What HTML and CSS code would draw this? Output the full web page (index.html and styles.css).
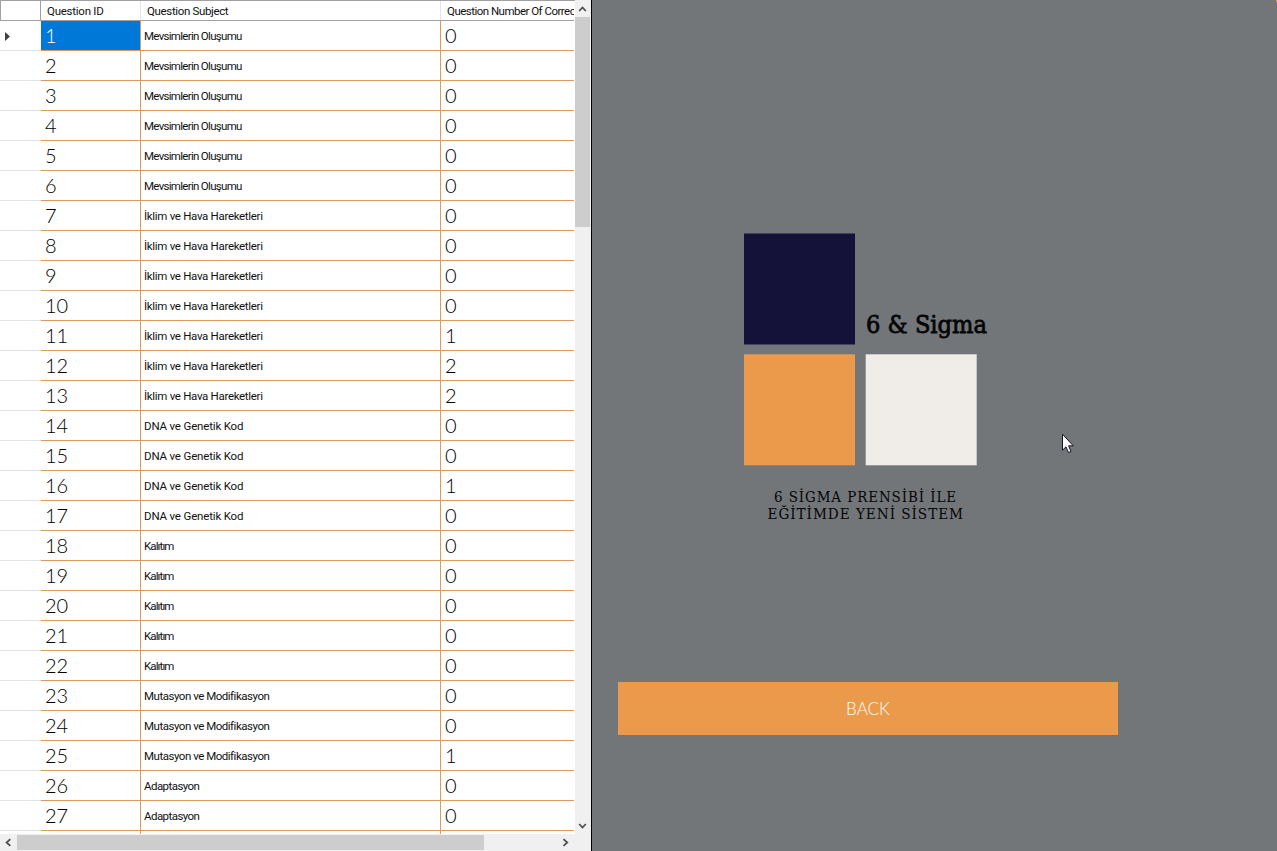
FILE: index.html
```
<!DOCTYPE html>
<html lang="tr">
<head>
<meta charset="utf-8">
<title>6 &amp; Sigma</title>
<link rel="stylesheet" href="styles.css">
</head>
<body>
<main class="app">
<section class="grid-pane">
<div class="grid-view">
<div class="head"><span class="corner"></span><span class="h-id">Question ID</span><span class="h-subject">Question Subject</span><span class="h-count">Question Number Of Correc</span></div>
<div class="row"><span class="gutter"><svg width="7" height="11" viewBox="0 0 7 11"><path d="M1 1L6 5.5L1 10Z" fill="#404040"/></svg></span><span class="num selected">1</span><span class="subject season">Mevsimlerin Oluşumu</span><span class="num count">0</span></div>
<div class="row"><span class="gutter"></span><span class="num">2</span><span class="subject season">Mevsimlerin Oluşumu</span><span class="num count">0</span></div>
<div class="row"><span class="gutter"></span><span class="num">3</span><span class="subject season">Mevsimlerin Oluşumu</span><span class="num count">0</span></div>
<div class="row"><span class="gutter"></span><span class="num">4</span><span class="subject season">Mevsimlerin Oluşumu</span><span class="num count">0</span></div>
<div class="row"><span class="gutter"></span><span class="num">5</span><span class="subject season">Mevsimlerin Oluşumu</span><span class="num count">0</span></div>
<div class="row"><span class="gutter"></span><span class="num">6</span><span class="subject season">Mevsimlerin Oluşumu</span><span class="num count">0</span></div>
<div class="row"><span class="gutter"></span><span class="num">7</span><span class="subject climate">İklim ve Hava Hareketleri</span><span class="num count">0</span></div>
<div class="row"><span class="gutter"></span><span class="num">8</span><span class="subject climate">İklim ve Hava Hareketleri</span><span class="num count">0</span></div>
<div class="row"><span class="gutter"></span><span class="num">9</span><span class="subject climate">İklim ve Hava Hareketleri</span><span class="num count">0</span></div>
<div class="row"><span class="gutter"></span><span class="num">10</span><span class="subject climate">İklim ve Hava Hareketleri</span><span class="num count">0</span></div>
<div class="row"><span class="gutter"></span><span class="num">11</span><span class="subject climate">İklim ve Hava Hareketleri</span><span class="num count">1</span></div>
<div class="row"><span class="gutter"></span><span class="num">12</span><span class="subject climate">İklim ve Hava Hareketleri</span><span class="num count">2</span></div>
<div class="row"><span class="gutter"></span><span class="num">13</span><span class="subject climate">İklim ve Hava Hareketleri</span><span class="num count">2</span></div>
<div class="row"><span class="gutter"></span><span class="num">14</span><span class="subject dna">DNA ve Genetik Kod</span><span class="num count">0</span></div>
<div class="row"><span class="gutter"></span><span class="num">15</span><span class="subject dna">DNA ve Genetik Kod</span><span class="num count">0</span></div>
<div class="row"><span class="gutter"></span><span class="num">16</span><span class="subject dna">DNA ve Genetik Kod</span><span class="num count">1</span></div>
<div class="row"><span class="gutter"></span><span class="num">17</span><span class="subject dna">DNA ve Genetik Kod</span><span class="num count">0</span></div>
<div class="row"><span class="gutter"></span><span class="num">18</span><span class="subject heredity">Kalıtım</span><span class="num count">0</span></div>
<div class="row"><span class="gutter"></span><span class="num">19</span><span class="subject heredity">Kalıtım</span><span class="num count">0</span></div>
<div class="row"><span class="gutter"></span><span class="num">20</span><span class="subject heredity">Kalıtım</span><span class="num count">0</span></div>
<div class="row"><span class="gutter"></span><span class="num">21</span><span class="subject heredity">Kalıtım</span><span class="num count">0</span></div>
<div class="row"><span class="gutter"></span><span class="num">22</span><span class="subject heredity">Kalıtım</span><span class="num count">0</span></div>
<div class="row"><span class="gutter"></span><span class="num">23</span><span class="subject mutation">Mutasyon ve Modifikasyon</span><span class="num count">0</span></div>
<div class="row"><span class="gutter"></span><span class="num">24</span><span class="subject mutation">Mutasyon ve Modifikasyon</span><span class="num count">0</span></div>
<div class="row"><span class="gutter"></span><span class="num">25</span><span class="subject mutation">Mutasyon ve Modifikasyon</span><span class="num count">1</span></div>
<div class="row"><span class="gutter"></span><span class="num">26</span><span class="subject adaptation">Adaptasyon</span><span class="num count">0</span></div>
<div class="row"><span class="gutter"></span><span class="num">27</span><span class="subject adaptation">Adaptasyon</span><span class="num count">0</span></div>
<div class="row"><span class="gutter"></span><span class="num"></span><span class="subject"></span><span class="num count"></span></div>
</div>
<div class="vbar">
<svg class="arrow" width="16" height="17" viewBox="0 0 16 17"><path d="M4.2 11L7.5 7.5L10.8 11" class="chev"/></svg>
<div class="vthumb"></div>
<svg class="arrow end" width="16" height="17" viewBox="0 0 16 17"><path d="M4.2 6L7.5 9.5L10.8 6" class="chev"/></svg>
</div>
<div class="hbar">
<svg width="17" height="16" viewBox="0 0 17 16"><path d="M10.3 4.2L6.6 7.5L10.3 10.8" class="chev"/></svg>
<div class="hthumb"></div>
<svg class="right" width="17" height="16" viewBox="0 0 17 16"><path d="M6.5 4.2L10.2 7.5L6.5 10.8" class="chev"/></svg>
</div>
</section>
<section class="side">
<svg class="logo" width="260" height="300" viewBox="740 230 260 300">
<rect x="744" y="233.5" width="111" height="111" fill="#15123a"/>
<rect x="744" y="354.3" width="111" height="111" fill="#eb994b"/>
<rect x="865.7" y="354.3" width="111" height="111" fill="#f0ede9"/>
<text class="brand" x="866" y="333" textLength="121" lengthAdjust="spacingAndGlyphs">6 &amp; Sigma</text>
<text class="tag" x="774" y="502.3" textLength="183" lengthAdjust="spacingAndGlyphs">6 SİGMA PRENSİBİ İLE</text>
<text class="tag" x="767.5" y="519.3" textLength="196.5" lengthAdjust="spacingAndGlyphs">EĞİTİMDE YENİ SİSTEM</text>
</svg>
<button class="back">BACK</button>
<svg class="cursor" width="14" height="22" viewBox="0 0 14 22"><path d="M1.5 1.2V17.2L5 13.8L7.5 19.6L10 18.5L7.6 12.8H12.3Z" fill="#fff" stroke="#14141e"/></svg>
<span class="edge"></span>
</section>
</main>
</body>
</html>
```
FILE: styles.css
```
* { box-sizing: border-box; }
body { margin: 0; background: #727679; }
.app { display: flex; width: 1277px; height: 851px; overflow: hidden; }
.grid-pane {
  display: grid;
  grid-template: 835px 16px / 575px 16px;
  width: 592px;
  background: #f0f0f0;
  border-right: 1px solid #000;
}
.grid-view {
  height: 834px;
  overflow: hidden;
  background: #fff;
  border-top: 1px solid #a0a0a0;
  font-family: Roboto, "Liberation Sans", sans-serif;
  font-size: 11.5px;
  color: #111;
}
.head, .row { display: grid; grid-template-columns: 41px 100px 300px 133px; width: 574px; }
.head { height: 20px; border-bottom: 1px solid #a0a0a0; line-height: 21px; white-space: nowrap; }
.head span { height: 19px; overflow: hidden; padding-left: 6px; border-right: 1px solid #e5e5e5; }
.head .corner { border-right-color: #a0a0a0; border-left: 1px solid #a0a0a0; }
.head .h-count { border-right: 0; }
.h-id { letter-spacing: -0.25px; }
.h-subject { letter-spacing: -0.35px; }
.h-count { letter-spacing: -0.52px; }
.row { height: 30px; line-height: 29px; }
.row span { height: 30px; border-bottom: 1px solid #dc9a5e; border-right: 1px solid #dc9a5e; }
.row .gutter { display: flex; align-items: center; padding: 2px 0 0 4px; border-right: 0; border-bottom-color: #e3e3e3; }
.row .num { padding-left: 4px; font-family: Lato, sans-serif; font-weight: 300; font-size: 20px; color: #000; }
.row .count { border-right: 0; }
.row .selected { background: #0078d7; color: #fff; }
.row .subject { padding-left: 3px; line-height: 31px; }
.season { letter-spacing: -0.7px; }
.climate { letter-spacing: -0.31px; }
.dna { letter-spacing: -0.17px; }
.heredity { letter-spacing: -0.9px; }
.mutation { letter-spacing: -0.48px; }
.adaptation { letter-spacing: -0.55px; }
.vbar { display: flex; flex-direction: column; height: 835px; background: #f0f0f0; }
.vthumb { width: 15px; height: 210px; background: #cdcdcd; }
.end { margin-top: auto; }
.hbar { display: flex; grid-column: 1 / 3; background: #f0f0f0; }
.hthumb { width: 467px; height: 15px; background: #cdcdcd; }
.right { margin-left: 73px; }
.chev { fill: none; stroke: #505050; stroke-width: 1.8; }
.side { position: relative; flex: 1; background: #727679; }
.logo { display: block; margin: 230px 0 0 148px; overflow: visible; }
.brand { font: 400 25px "DejaVu Serif", serif; stroke: #050505; stroke-width: 0.8px; }
.brand, .tag { fill: #050505; }
.tag { font: 14.5px "DejaVu Serif", serif; letter-spacing: 1px; }
.back {
  display: block;
  width: 500px;
  height: 53px;
  margin: 152px 0 0 26px;
  padding: 0;
  border: 0;
  background: #eb994b;
  color: #fff;
  font: 300 17px Lato, sans-serif;
}
.cursor { position: absolute; left: 469px; top: 433px; }
.edge { position: absolute; right: 0; top: 0; width: 1px; height: 2px; background: #eb994b; }
```
